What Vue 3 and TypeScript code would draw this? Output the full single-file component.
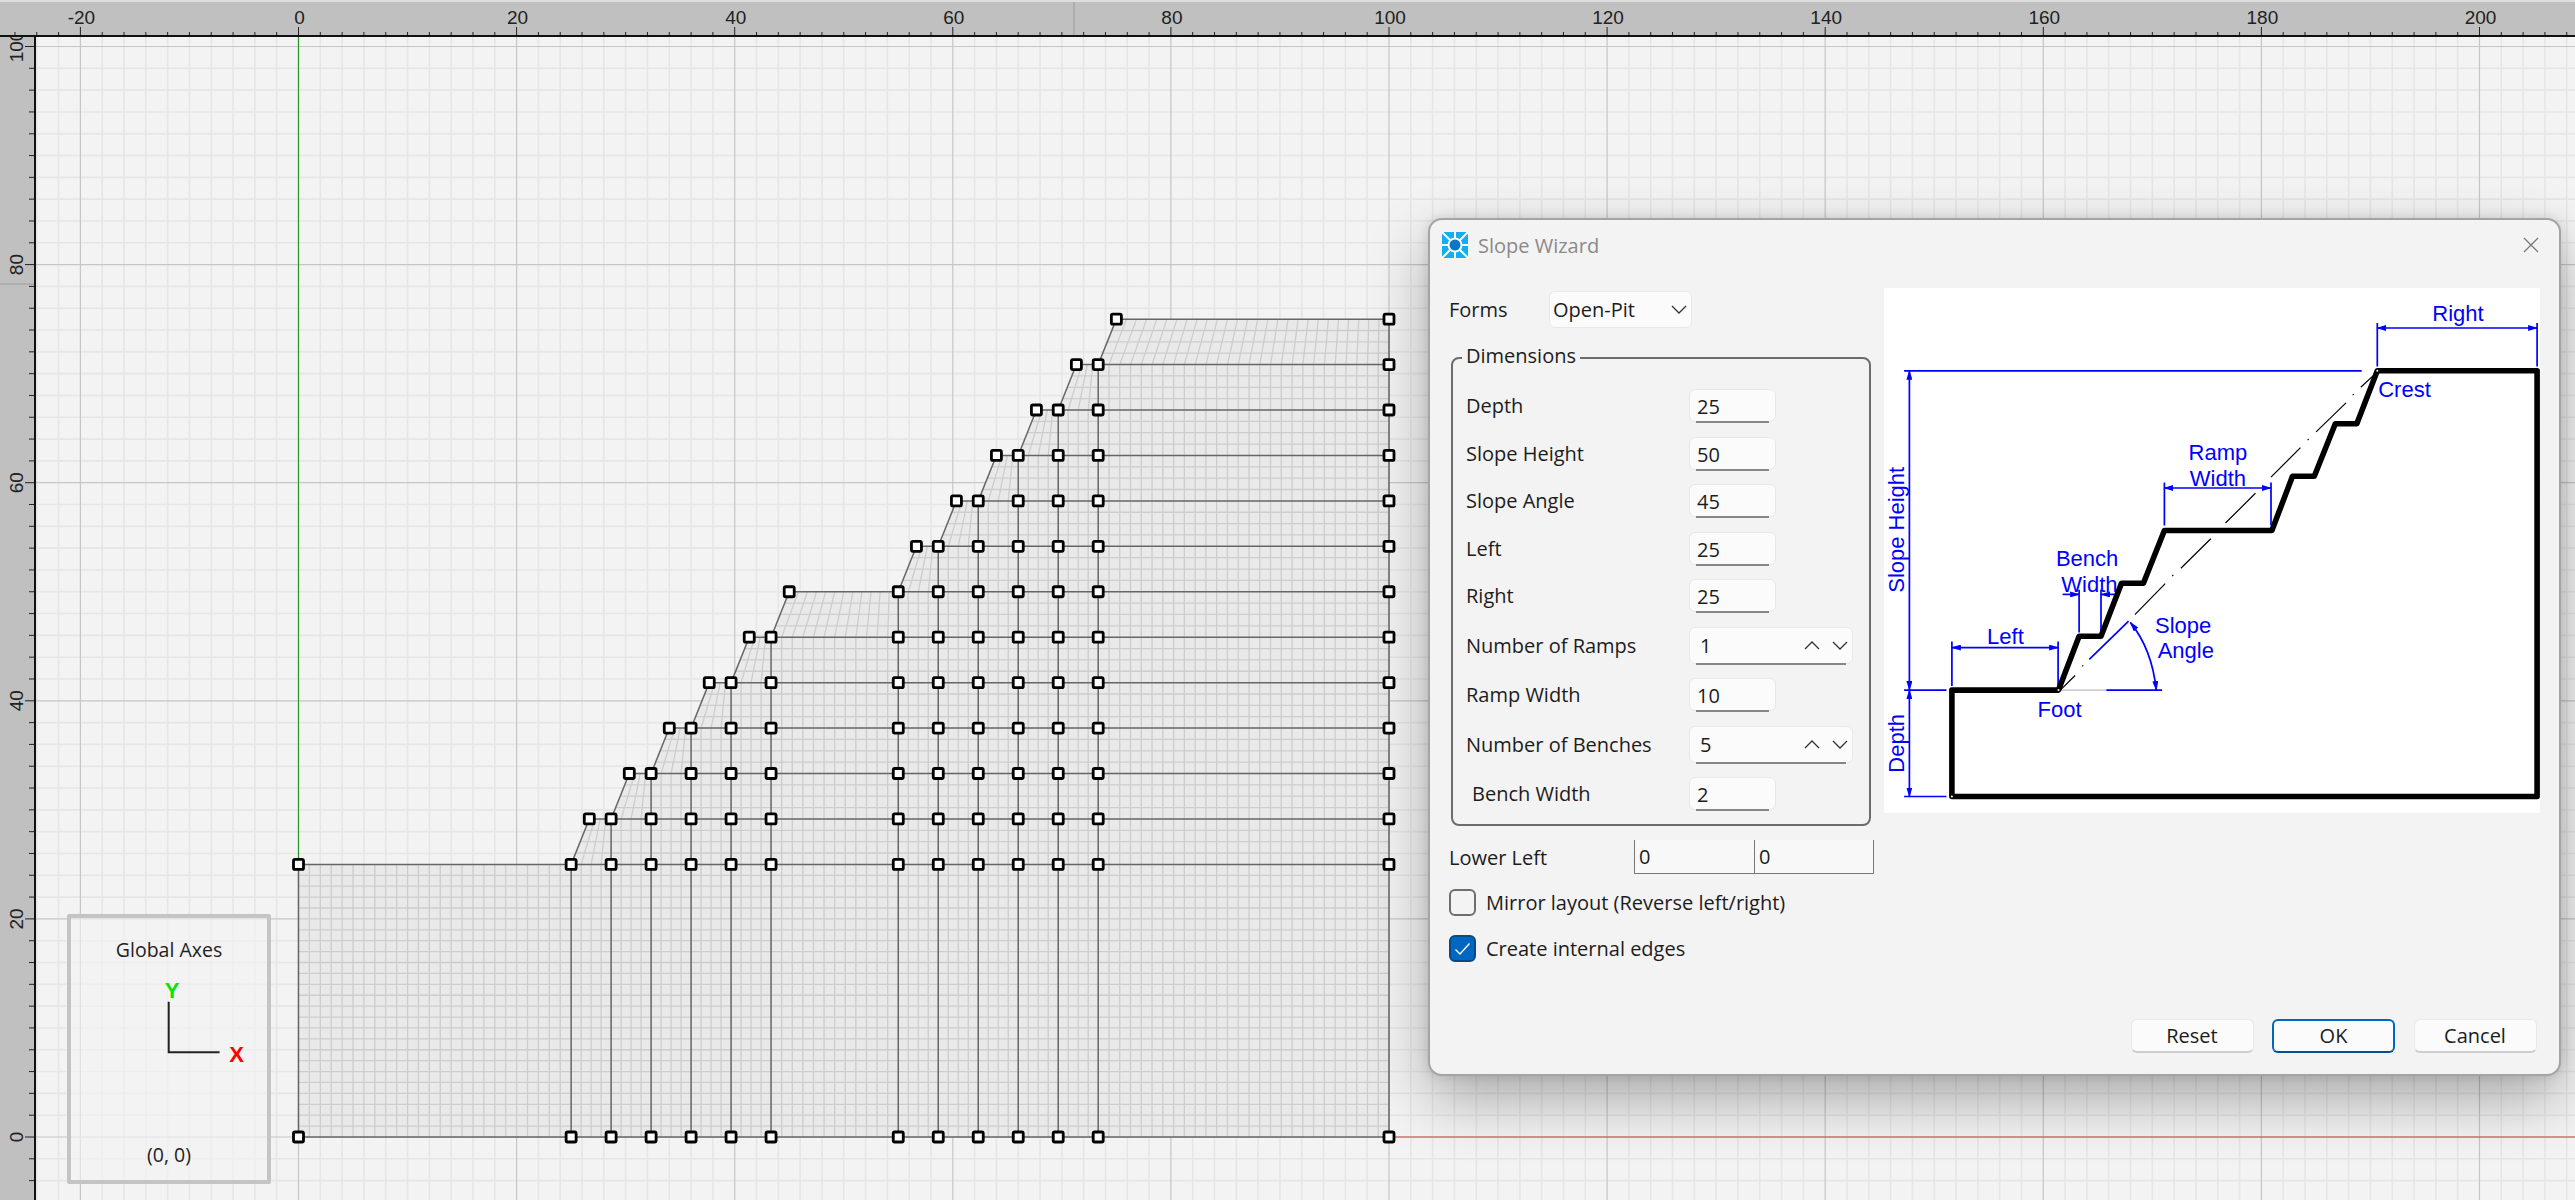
<script setup lang="ts">
interface DimRow {
  label: string
  value: string
  spin?: boolean
  indent?: boolean
}

const dimRows: DimRow[] = [
  { label: 'Depth', value: '25' },
  { label: 'Slope Height', value: '50' },
  { label: 'Slope Angle', value: '45' },
  { label: 'Left', value: '25' },
  { label: 'Right', value: '25' },
  { label: 'Number of Ramps', value: '1', spin: true },
  { label: 'Ramp Width', value: '10' },
  { label: 'Number of Benches', value: '5', spin: true },
  { label: 'Bench Width', value: '2', indent: true },
]

// world units to page pixels
const SCALE = 10.905
const sx = (u: number) => +(298.5 + SCALE * u).toFixed(2)
const sy = (v: number) => +(1137 - SCALE * v).toFixed(2)
const seg = (x1: number, y1: number, x2: number, y2: number) =>
  `M${sx(x1)} ${sy(y1)}L${sx(x2)} ${sy(y2)}`

let minorGrid = ''
let majorGrid = ''
let topTicks = ''
let leftTicks = ''
const topLabels: { text: string; x: number }[] = []
const leftLabels: { text: string; y: number }[] = []

for (let u = -26; u <= 210; u += 2) {
  const x = sx(u)
  const major = u % 20 === 0
  if (major) {
    majorGrid += `M${x} 37V1200`
    topLabels.push({ text: String(u), x })
  } else {
    minorGrid += `M${x} 37V1200`
  }
  topTicks += `M${x} ${major ? 27 : 32}V36`
}
for (let v = -6; v <= 102; v += 2) {
  const y = sy(v)
  const major = v % 20 === 0
  if (major) {
    majorGrid += `M36 ${y}H2575`
    leftLabels.push({ text: String(v), y })
  } else {
    minorGrid += `M36 ${y}H2575`
  }
  leftTicks += `M${major ? 25 : 29} ${y}H35`
}

// slope geometry: 12 toe columns and 13 levels
const RISE = 25 / 6
const RUN = 5 / 3
const STEP = RUN + 2
const cols: number[] = []
for (let i = 0; i < 6; i++) cols.push(25 + i * STEP)
for (let i = 0; i < 6; i++) cols.push(55 + i * STEP)
const levels: number[] = []
for (let k = 0; k <= 12; k++) levels.push(25 + k * RISE)
const benchLeft = (k: number) => (k === 0 ? 0 : cols[k - 1] + RUN)

let mesh = ''
for (let v = 1; v < 25; v++) mesh += seg(0, v, 100, v)
for (let u = 1; u < 25; u++) mesh += seg(u, 0, u, 25)
for (let k = 0; k < 12; k++) {
  const c = cols[k]
  const limit = k < 11 ? cols[k + 1] : 100
  const n = Math.round(limit - c)
  for (let i = 1; i < n; i++) {
    const t = i / n
    const xb = c + t * (limit - c)
    const xt = c + RUN + t * (limit - c - RUN)
    mesh += seg(xb, 0, xb, levels[k])
    mesh += seg(xb, levels[k], xt, levels[k + 1])
  }
  for (let r = 1; r < 4; r++) {
    const v = levels[k] + (r * RISE) / 4
    mesh += seg(c + (r * RUN) / 4, v, 100, v)
  }
}

let edges = seg(0, 0, 100, 0) + seg(0, 0, 0, 25) + seg(100, 0, 100, 75)
for (let k = 0; k <= 12; k++) {
  edges += seg(benchLeft(k), levels[k], 100, levels[k])
  if (k < 12) {
    edges += seg(cols[k], 0, cols[k], levels[k])
    edges += seg(cols[k], levels[k], cols[k] + RUN, levels[k + 1])
  }
}

const outline: string[] = [`${sx(0)},${sy(0)}`, `${sx(100)},${sy(0)}`, `${sx(100)},${sy(75)}`]
for (let k = 12; k >= 1; k--) {
  outline.push(`${sx(benchLeft(k))},${sy(levels[k])}`)
  outline.push(`${sx(cols[k - 1])},${sy(levels[k - 1])}`)
}
outline.push(`${sx(0)},${sy(25)}`)
const meshFill = outline.join(' ')

const nodes: { x: number; y: number }[] = []
const addNode = (u: number, v: number) => nodes.push({ x: sx(u), y: sy(v) })
addNode(0, 0)
cols.forEach((c) => addNode(c, 0))
addNode(100, 0)
for (let k = 0; k <= 12; k++) {
  addNode(benchLeft(k), levels[k])
  cols.slice(k).forEach((c) => addNode(c, levels[k]))
  addNode(100, levels[k])
}

const profile =
  '67.9,508.5 67.9,402.1 174.5,402.1 195.1,348.2 217,348.2 237.5,295.3 259.4,295.3 280.4,242.5 387.9,242.5 408.5,188.2 430.3,188.2 451.3,135.7 472.8,135.7 493.3,82.8 653.1,82.8 653.1,508.5'
const centerLine =
  'M176.3 402.1L191.1 387.5M198.2 378.3L199.2 377.3M250.9 326.7L281.2 295.7M288.3 288L289.3 287M296.9 280.3L326.8 250.7M341.5 235L371.4 205.3M387 189.2L416.5 159.6M423.6 152.2L424.6 151.2M432.1 143.9L462 114.9M468.7 107.2L469.7 106.2M476.8 99.2L493.3 83.9'
</script>

<template>
  <div class="app">
    <svg class="ruler-top" viewBox="0 0 2575 37">
      <path d="M0 1H2575" class="ruler-edge" />
      <path :d="topTicks" class="tick" />
      <text v-for="l in topLabels" :key="l.text" :x="l.x + 1" y="24" class="ruler-text">{{ l.text }}</text>
      <path d="M1074 2V36" class="cursor-mark" />
      <path d="M0 36H2575" class="ruler-line" />
    </svg>
    <svg class="ruler-left" viewBox="0 37 36 1163">
      <path :d="leftTicks" class="tick" />
      <text
        v-for="l in leftLabels"
        :key="l.text"
        :transform="`translate(23 ${l.y}) rotate(-90)`"
        class="ruler-text"
      >{{ l.text }}</text>
      <path d="M0 284H34" class="cursor-mark" />
      <path d="M35 37V1200" class="ruler-line" />
    </svg>

    <div class="viewport">
      <svg class="canvas" viewBox="36 37 2539 1163">
        <path :d="minorGrid" class="grid-minor" />
        <path :d="majorGrid" class="grid-major" />
        <path :d="`M${sx(0)} 37V${sy(25)}`" class="axis-y" />
        <path :d="`M${sx(100)} ${sy(0)}H2575`" class="axis-x" />
        <polygon :points="meshFill" class="mesh-fill" />
        <path :d="mesh" class="mesh" />
        <path :d="edges" class="edges" />
        <rect
          v-for="(n, i) in nodes"
          :key="i"
          :x="n.x - 5"
          :y="n.y - 5"
          width="10"
          height="10"
          rx="1.5"
          class="node"
        />
      </svg>

      <div class="axes-box">
        <div class="axes-title">Global Axes</div>
        <svg class="axes-svg" width="150" height="95" viewBox="0 0 150 95">
          <path d="M74.7 25.7V76.3H125.6" class="axes-lines" />
          <text x="78" y="22" class="axis-letter axis-letter-y">Y</text>
          <text x="142.6" y="86" class="axis-letter axis-letter-x">X</text>
        </svg>
        <div class="axes-coord">(0, 0)</div>
      </div>

      <div class="dialog">
        <div class="titlebar">
          <svg class="app-icon" width="26" height="26" viewBox="0 0 26 26">
            <rect width="26" height="26" rx="1" fill="#12aef0" />
            <path d="M0 0L26 26M26 0L0 26M13 0V26M0 13H26" stroke="#fff" stroke-width="2" />
            <circle cx="13" cy="13" r="7.5" fill="#fff" />
            <circle cx="13" cy="13" r="5.5" fill="#0a76c6" />
          </svg>
          <span class="title">Slope Wizard</span>
          <svg class="close" width="16" height="16" viewBox="0 0 16 16">
            <path d="M1 1L15 15M15 1L1 15" stroke="#777" stroke-width="1.3" fill="none" />
          </svg>
        </div>

        <div class="body">
          <div class="form">
            <div class="forms-row">
              <span class="forms-label">Forms</span>
              <div class="combo">
                <span>Open-Pit</span>
                <svg width="16" height="9" viewBox="0 0 16 9">
                  <path d="M1 1L8 8L15 1" class="chev" />
                </svg>
              </div>
            </div>

            <div class="group">
              <span class="legend">Dimensions</span>
              <div v-for="row in dimRows" :key="row.label" class="dim-row">
                <span class="dim-label" :class="{ indent: row.indent }">{{ row.label }}</span>
                <div v-if="row.spin" class="spin">
                  <span>{{ row.value }}</span>
                  <div class="spin-btns">
                    <svg width="16" height="9" viewBox="0 0 16 9"><path d="M1 8L8 1L15 8" class="chev" /></svg>
                    <svg width="16" height="9" viewBox="0 0 16 9"><path d="M1 1L8 8L15 1" class="chev" /></svg>
                  </div>
                </div>
                <div v-else class="field">{{ row.value }}</div>
              </div>
            </div>

            <div class="lower-left">
              <span class="lower-label">Lower Left</span>
              <div class="cell">0</div>
              <div class="cell">0</div>
            </div>

            <div class="check-row">
              <span class="check"></span>
              <span>Mirror layout (Reverse left/right)</span>
            </div>
            <div class="check-row second">
              <span class="check on">
                <svg width="17" height="14" viewBox="0 0 17 14">
                  <path d="M1.5 7.5L6 12L15.5 1.5" fill="none" stroke="#fff" stroke-width="1.3" />
                </svg>
              </span>
              <span>Create internal edges</span>
            </div>
          </div>

          <svg class="picture" width="656" height="525" viewBox="0 0 656 525">
            <defs>
              <marker id="arrow" markerWidth="10" markerHeight="6" refX="9" refY="3" orient="auto-start-reverse" markerUnits="userSpaceOnUse">
                <path d="M0 0L10 3L0 6Z" fill="#0000ff" />
              </marker>
            </defs>
            <g class="dim-lines">
              <path d="M20.1 82.8H477.7M20.1 402.1H62.5M20.1 508.5H62.5" />
              <path d="M222.3 402.1H278.1M205.3 371.4L244.6 333.2" />
              <path d="M493.3 35V78.5M653.1 35V78.5M67.9 353.5V398M174.1 353.5V398" />
              <path d="M280.4 194.6V237.5M387 194.6V237.5M195.1 301.7V344.6M217 301.7V344.6" />
              <path d="M25.4 82.8V402.1" marker-start="url(#arrow)" marker-end="url(#arrow)" />
              <path d="M25.4 402.1V508.5" marker-start="url(#arrow)" marker-end="url(#arrow)" />
              <path d="M493.3 40H653.1" marker-start="url(#arrow)" marker-end="url(#arrow)" />
              <path d="M67.9 359.6H174.1" marker-start="url(#arrow)" marker-end="url(#arrow)" />
              <path d="M280.4 200H387" marker-start="url(#arrow)" marker-end="url(#arrow)" />
              <path d="M178.6 306.4H195.1" marker-end="url(#arrow)" />
              <path d="M232.1 306.4H217" marker-end="url(#arrow)" />
              <path d="M246.4 334.6Q267.8 360.7 272.3 402.1" marker-start="url(#arrow)" marker-end="url(#arrow)" />
            </g>
            <path d="M176 402.1H222.3" stroke="#aaa" stroke-width="1" fill="none" />
            <path :d="centerLine" stroke="#000" stroke-width="1.2" fill="none" />
            <polygon :points="profile" class="profile" />
            <g fill="#fff">
              <circle cx="67.9" cy="508.5" r="1" />
              <circle cx="174.5" cy="402.1" r="1" />
              <circle cx="493.3" cy="82.8" r="1" />
            </g>
            <g class="pic-text">
              <text x="574" y="32.8" text-anchor="middle">Right</text>
              <text x="494.2" y="108.9">Crest</text>
              <text x="153.6" y="429.2">Foot</text>
              <text x="121.4" y="356.4" text-anchor="middle">Left</text>
              <text x="333.9" y="172" text-anchor="middle">Ramp</text>
              <text x="333.9" y="197.5" text-anchor="middle">Width</text>
              <text x="203.1" y="277.8" text-anchor="middle">Bench</text>
              <text x="205.4" y="303.5" text-anchor="middle">Width</text>
              <text x="299.1" y="344.6" text-anchor="middle">Slope</text>
              <text x="301.8" y="370" text-anchor="middle">Angle</text>
              <text transform="translate(20 241.8) rotate(-90)" text-anchor="middle">Slope Height</text>
              <text transform="translate(20 455.3) rotate(-90)" text-anchor="middle">Depth</text>
            </g>
          </svg>
        </div>

        <div class="footer">
          <button class="btn">Reset</button>
          <button class="btn primary">OK</button>
          <button class="btn">Cancel</button>
        </div>
      </div>
    </div>
  </div>
</template>

<style>
html,
body {
  margin: 0;
  background: #f3f3f3;
}
</style>

<style scoped>
.app {
  display: grid;
  grid-template-columns: 36px 2539px;
  grid-template-rows: 37px 1163px;
  width: 2575px;
  height: 1200px;
  overflow: hidden;
  background: #c0c0c0;
  font-family: "Open Sans", "Noto Sans", sans-serif;
  font-size: 20px;
  color: #1c1c1c;
}

.ruler-top {
  grid-column: 1 / 3;
  width: 2575px;
  height: 37px;
  display: block;
}

.ruler-left {
  width: 36px;
  height: 1163px;
  display: block;
}

.ruler-edge {
  stroke: #dedede;
  stroke-width: 2;
  fill: none;
}

.tick {
  stroke: #222;
  stroke-width: 1;
  fill: none;
}

.ruler-line {
  stroke: #111;
  stroke-width: 2;
  fill: none;
}

.cursor-mark {
  stroke: #9c9c9c;
  stroke-width: 1;
  fill: none;
}

.ruler-text {
  font-family: "Liberation Sans", Arial, sans-serif;
  font-size: 19px;
  fill: #222;
  text-anchor: middle;
}

.viewport {
  position: relative;
  width: 2539px;
  height: 1163px;
  background: #f3f3f3;
}

.canvas {
  display: block;
  width: 2539px;
  height: 1163px;
}

.grid-minor {
  stroke: #e6e6e6;
  stroke-width: 1.6;
  fill: none;
}

.grid-major {
  stroke: #c6c6c6;
  stroke-width: 1.2;
  fill: none;
}

.axis-y {
  stroke: #2a962a;
  stroke-width: 1.2;
  fill: none;
}

.axis-x {
  stroke: #cf4a4a;
  stroke-width: 1.2;
  fill: none;
}

.mesh-fill {
  fill: #e9e9e9;
}

.mesh {
  stroke: #cdcdcd;
  stroke-width: 1.3;
  fill: none;
}

.edges {
  stroke: #666;
  stroke-width: 1.5;
  fill: none;
}

.node {
  fill: #fff;
  stroke: #000;
  stroke-width: 2.8;
}

.axes-box {
  position: absolute;
  left: 31px;
  top: 877px;
  width: 204px;
  height: 270px;
  box-sizing: border-box;
  border: 4px solid #c4c4c4;
  border-radius: 2px;
  background: rgba(243, 243, 243, 0.6);
  display: flex;
  flex-direction: column;
  align-items: center;
  font-size: 19.5px;
  color: #222;
}

.axes-title {
  margin-top: 18px;
}

.axes-svg {
  display: block;
  margin-top: 13px;
}

.axes-lines {
  fill: none;
  stroke: #222;
  stroke-width: 2;
}

.axis-letter {
  font-family: "Liberation Sans", Arial, sans-serif;
  font-weight: 700;
  font-size: 22px;
}

.axis-letter-y {
  fill: #00e600;
  text-anchor: middle;
}

.axis-letter-x {
  fill: #f00;
  text-anchor: middle;
}

.axes-coord {
  margin-top: auto;
  margin-bottom: 12px;
}

.dialog {
  position: absolute;
  left: 1392px;
  top: 181px;
  width: 1133px;
  height: 858px;
  box-sizing: border-box;
  display: flex;
  flex-direction: column;
  background: #f3f3f3;
  border: 2px solid #a4a4a4;
  border-radius: 14px;
  box-shadow: 0 24px 60px rgba(0, 0, 0, 0.3), 0 0 12px rgba(0, 0, 0, 0.12);
}

.titlebar {
  display: flex;
  align-items: center;
  height: 68px;
  padding: 0 20px 18px 12px;
  box-sizing: border-box;
  flex: none;
}

.title {
  margin-left: 10px;
  color: #8a8a8a;
}

.close {
  margin-left: auto;
}

.body {
  display: flex;
  gap: 10px;
  padding-left: 19px;
  flex: none;
}

.form {
  width: 425px;
  flex: none;
}

.forms-row {
  display: flex;
  align-items: center;
  margin-top: 3px;
}

.forms-label {
  width: 100px;
}

.combo {
  display: flex;
  align-items: center;
  justify-content: space-between;
  box-sizing: border-box;
  width: 143px;
  height: 37px;
  padding: 0 4px 0 3px;
  background: #fbfbfb;
  border: 1px solid #e8e8e8;
  border-radius: 6px;
}

.chev {
  fill: none;
  stroke: #333;
  stroke-width: 1.3;
}

.group {
  position: relative;
  box-sizing: border-box;
  width: 420px;
  height: 469px;
  margin: 29px 0 0 2px;
  padding: 30px 13px 0;
  display: flex;
  flex-direction: column;
  gap: 14.5px;
  border: 2px solid #6c6c6c;
  border-radius: 8px;
}

.legend {
  position: absolute;
  left: 9px;
  top: -17px;
  padding: 0 4px;
  line-height: 27px;
  background: #f3f3f3;
}

.dim-row {
  display: flex;
  align-items: center;
}

.dim-label {
  width: 223px;
  flex: none;
}

.dim-label.indent {
  padding-left: 6px;
  box-sizing: border-box;
}

.field,
.spin {
  position: relative;
  box-sizing: border-box;
  background: #fbfbfb;
  border: 1px solid #e8e8e8;
  border-radius: 6px;
}

.field {
  width: 87px;
  height: 33px;
  padding: 2px 0 0 7px;
  line-height: 30px;
}

.spin {
  display: flex;
  align-items: center;
  justify-content: space-between;
  width: 164px;
  height: 37px;
  padding: 0 4px 0 10px;
}

.spin-btns {
  display: flex;
  gap: 12px;
}

.field::after,
.spin::after {
  content: "";
  position: absolute;
  left: 6px;
  right: 6px;
  bottom: -2px;
  height: 2px;
  background: #868686;
}

.lower-left {
  display: flex;
  align-items: center;
  margin-top: 14px;
}

.lower-label {
  width: 185px;
  flex: none;
}

.cell {
  box-sizing: border-box;
  width: 120px;
  height: 34px;
  padding-left: 4px;
  line-height: 34px;
  background: #f8f8f8;
  border-left: 1.5px solid #777;
  border-bottom: 1.5px solid #777;
}

.cell:last-child {
  border-right: 1.5px solid #777;
}

.check-row {
  display: flex;
  align-items: center;
  gap: 10px;
  height: 27px;
  margin-top: 15px;
}

.check-row.second {
  margin-top: 19px;
}

.check {
  box-sizing: border-box;
  width: 27px;
  height: 27px;
  border: 2px solid #6e6e6e;
  border-radius: 6px;
  display: flex;
  align-items: center;
  justify-content: center;
}

.check.on {
  background: #0067c0;
  border-color: #064a86;
}

.picture {
  display: block;
  flex: none;
  background: #fff;
}

.pic-text {
  font-family: "Liberation Sans", Arial, sans-serif;
  font-size: 22px;
  fill: #0000ff;
}

.dim-lines {
  fill: none;
  stroke: #0000ff;
  stroke-width: 1.7;
}

.profile {
  fill: none;
  stroke: #000;
  stroke-width: 5.6;
  stroke-linejoin: round;
}

.footer {
  display: flex;
  justify-content: flex-end;
  gap: 18.5px;
  margin-top: auto;
  padding: 0 22.5px 21px 0;
}

.btn {
  box-sizing: border-box;
  width: 123px;
  height: 34.5px;
  padding: 0;
  font: inherit;
  color: inherit;
  background: #fbfbfb;
  border: 1px solid #e8e8e8;
  border-bottom: 2px solid #cdcdcd;
  border-radius: 6px;
}

.btn.primary {
  border: 2px solid #0067c0;
  border-bottom-color: #00508f;
}
</style>
